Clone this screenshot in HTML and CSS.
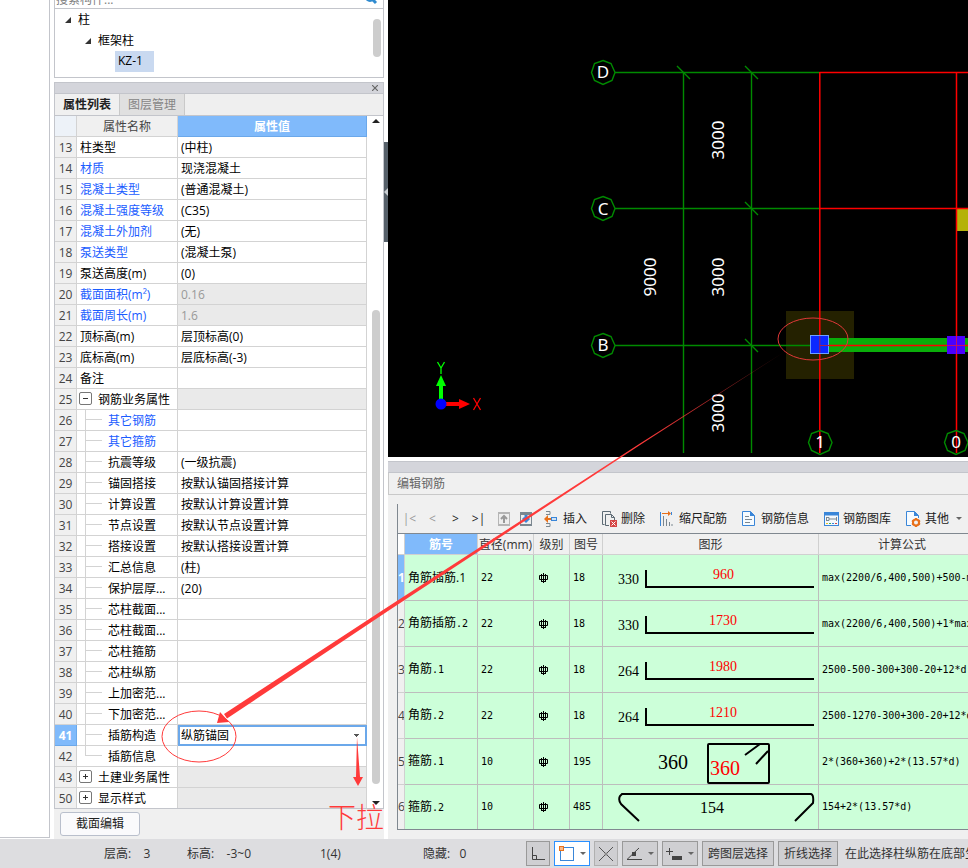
FILE: index.html
```html
<!DOCTYPE html>
<html lang="zh-CN">
<head>
<meta charset="utf-8">
<title>属性列表</title>
<link rel="stylesheet" href="styles.css">
</head>
<body>
<div class="app">
  <main class="workspace">
    <div class="rail"></div>

    <aside class="sidebar">
      <section class="browser">
        <div class="search">
          <input type="text" placeholder="搜索构件..." aria-label="搜索构件">
          <svg width="14" height="14" viewBox="0 0 14 14" aria-hidden="true"><circle cx="6" cy="5" r="4" fill="none" stroke="#2f8bd0" stroke-width="2"/><path d="M8 7l4 4" stroke="#2f8bd0" stroke-width="3"/></svg>
        </div>
        <div class="tree-box">
          <ul class="tree">
            <li class="level-1"><svg width="6" height="6" viewBox="0 0 6 6"><path d="M6 0v6H0z" fill="#333"/></svg><span>柱</span></li>
            <li class="level-2"><svg width="6" height="6" viewBox="0 0 6 6"><path d="M6 0v6H0z" fill="#333"/></svg><span>框架柱</span></li>
            <li class="level-3"><span class="selected">KZ-1</span></li>
          </ul>
          <div class="tree-thumb"></div>
        </div>
      </section>

      <section class="props">
        <div class="dock-bar"><button class="dock-close" aria-label="关闭"><svg width="6" height="6" viewBox="0 0 6 6"><path d="M0 0l6 6M6 0L0 6" stroke="#666" stroke-width="1.2"/></svg></button></div>
        <div class="tabs"><button class="tab active">属性列表</button><button class="tab">图层管理</button></div>
        <div class="props-body">
          <table class="prop-table">
            <colgroup><col class="c-num"><col class="c-name"><col></colgroup>
            <thead><tr><th></th><th>属性名称</th><th class="value-head">属性值</th></tr></thead>
            <tbody>
              <tr><th>13</th><td>柱类型</td><td>(中柱)</td></tr>
              <tr><th>14</th><td class="blue">材质</td><td>现浇混凝土</td></tr>
              <tr><th>15</th><td class="blue">混凝土类型</td><td>(普通混凝土)</td></tr>
              <tr><th>16</th><td class="blue">混凝土强度等级</td><td>(C35)</td></tr>
              <tr><th>17</th><td class="blue">混凝土外加剂</td><td>(无)</td></tr>
              <tr><th>18</th><td class="blue">泵送类型</td><td>(混凝土泵)</td></tr>
              <tr><th>19</th><td>泵送高度(m)</td><td>(0)</td></tr>
              <tr><th>20</th><td class="blue">截面面积(m²)</td><td class="locked">0.16</td></tr>
              <tr><th>21</th><td class="blue">截面周长(m)</td><td class="locked">1.6</td></tr>
              <tr><th>22</th><td>顶标高(m)</td><td>层顶标高(0)</td></tr>
              <tr><th>23</th><td>底标高(m)</td><td>层底标高(-3)</td></tr>
              <tr><th>24</th><td>备注</td><td></td></tr>
              <tr><th>25</th><td class="group"><button class="toggle open" aria-label="收起"></button>钢筋业务属性</td><td class="locked"></td></tr>
              <tr><th>26</th><td class="child blue">其它钢筋</td><td></td></tr>
              <tr><th>27</th><td class="child blue">其它箍筋</td><td></td></tr>
              <tr><th>28</th><td class="child">抗震等级</td><td>(一级抗震)</td></tr>
              <tr><th>29</th><td class="child">锚固搭接</td><td>按默认锚固搭接计算</td></tr>
              <tr><th>30</th><td class="child">计算设置</td><td>按默认计算设置计算</td></tr>
              <tr><th>31</th><td class="child">节点设置</td><td>按默认节点设置计算</td></tr>
              <tr><th>32</th><td class="child">搭接设置</td><td>按默认搭接设置计算</td></tr>
              <tr><th>33</th><td class="child">汇总信息</td><td>(柱)</td></tr>
              <tr><th>34</th><td class="child">保护层厚...</td><td>(20)</td></tr>
              <tr><th>35</th><td class="child">芯柱截面...</td><td></td></tr>
              <tr><th>36</th><td class="child">芯柱截面...</td><td></td></tr>
              <tr><th>37</th><td class="child">芯柱箍筋</td><td></td></tr>
              <tr><th>38</th><td class="child">芯柱纵筋</td><td></td></tr>
              <tr><th>39</th><td class="child">上加密范...</td><td></td></tr>
              <tr><th>40</th><td class="child">下加密范...</td><td></td></tr>
              <tr><th class="current">41</th><td class="child">插筋构造</td><td class="editing"><select aria-label="插筋构造"><option>纵筋锚固</option></select></td></tr>
              <tr><th>42</th><td class="child last">插筋信息</td><td></td></tr>
              <tr><th>43</th><td class="group"><button class="toggle" aria-label="展开"></button>土建业务属性</td><td class="locked"></td></tr>
              <tr><th>50</th><td class="group"><button class="toggle" aria-label="展开"></button>显示样式</td><td class="locked"></td></tr>
            </tbody>
          </table>
          <div class="scroll">
            <svg width="8" height="4" viewBox="0 0 8 4"><path d="M4 0l4 4H0z" fill="#222"/></svg>
            <div class="scroll-thumb"></div>
            <svg width="8" height="4" viewBox="0 0 8 4"><path d="M4 4l4-4H0z" fill="#222"/></svg>
          </div>
        </div>
        <div class="props-foot"><button class="section-edit">截面编辑</button></div>
      </section>
    </aside>

    <div class="splitter"><div class="grip"><svg width="4" height="8" viewBox="0 0 4 8"><path d="M4 0v8L0 4z" fill="#c9ced2"/></svg></div></div>

    <div class="right">
      <section class="viewport">
        <svg class="drawing" width="100%" height="457">
          <rect x="398" y="311" width="68" height="68" fill="#242100"/>
          <g stroke="#008a00" stroke-width="1.400" fill="none">
            <path d="M227 72.500H432M227 208.500H432M227 345.500H432M295.500 72V453M363.500 72V453"/>
            <path d="M289 66l13 13M357 66l13 13M357 202l13 13M357 339l13 13"/>
          </g>
          <rect x="441" y="338" width="160" height="14" fill="#0aad0a"/>
          <rect x="569" y="209" width="30" height="22" fill="#b4b20a"/>
          <path d="M432 72.500H600M432 208.500H600M432 345.500H600M431.800 72V453M568.500 72V453" stroke="#f00" stroke-width="1.500" fill="none"/>
          <rect x="422.500" y="335.500" width="18" height="18" fill="#0a28ff" stroke="#6ea0ff"/>
          <path d="M431.800 336v17M432 345.500h9" stroke="#a02050"/>
          <rect x="559" y="336" width="18" height="18" fill="#4a00ff"/>
          <path d="M568.500 336v18M559 345.500h18" stroke="#c0106a"/>
          <g stroke="#008a00" fill="none">
            <path id="bubble" d="M215 60.500L223 63.500 227 72.500 224 80.500 215 84.500 206.500 80.500 203.500 72.500 206.500 63.500z" stroke-width="1.400"/>
            <use href="#bubble" y="136"/><use href="#bubble" y="273"/>
            <use href="#bubble" x="217" y="370"/><use href="#bubble" x="353" y="370"/>
          </g>
          <g class="cad-text">
            <text x="215" y="78">D</text><text x="215" y="215">C</text><text x="215" y="351">B</text>
            <text x="432" y="448">1</text><text x="568" y="448">0</text>
            <text transform="translate(336 140) rotate(-90)">3000</text>
            <text transform="translate(336 277) rotate(-90)">3000</text>
            <text transform="translate(336 413) rotate(-90)">3000</text>
            <text transform="translate(268 277) rotate(-90)">9000</text>
          </g>
          <path d="M48 386l5-11 5 11z" fill="#0f0"/>
          <path d="M53 404V384" stroke="#0f0" stroke-width="4"/>
          <path d="M56 404h16" stroke="#f00" stroke-width="4"/>
          <path d="M71 399v10l11-5z" fill="#f00"/>
          <circle cx="53" cy="404" r="5.500" fill="#00f"/>
          <path d="M49.500 362l3.500 6 3.500-6M53 368v6" stroke="#0f0" stroke-width="1.300" fill="none"/>
          <path d="M85.500 398l7 12M92.500 398l-7 12" stroke="#f00" stroke-width="1.300" fill="none"/>
        </svg>
      </section>

      <section class="rebar">
        <div class="rebar-bar"></div>
        <h2 class="rebar-title">编辑钢筋</h2>
        <div class="rebar-frame">
          <div class="toolbar">
            <button class="nav off" aria-label="首行">|&lt;</button>
            <button class="nav off" aria-label="上一行">&lt;</button>
            <button class="nav" aria-label="下一行">&gt;</button>
            <button class="nav" aria-label="末行">&gt;|</button>
            <button class="tool icon-only" aria-label="上移"><svg width="12" height="14" viewBox="0 0 12 14"><rect width="12" height="14" fill="#b5b5b5"/><rect x="1" y="2" width="10" height="10" fill="#eee"/><path d="M6 11V4M3 7l3-3 3 3" stroke="#999" stroke-width="2" fill="none"/></svg></button>
            <button class="tool icon-only" aria-label="下移"><svg width="12" height="14" viewBox="0 0 12 14"><rect width="12" height="14" fill="#7b8790"/><rect x="1" y="3" width="10" height="9" fill="#eee"/><path d="M6 3v6M3 6l3 3 3-3" stroke="#3a86d8" stroke-width="3" fill="none"/></svg></button>
            <button class="tool"><svg width="15" height="16" viewBox="0 0 15 16"><path d="M2 .5h4v3H2M2 12.500h4v3H2" stroke="#7b8790" fill="none"/><path d="M7 8H2" stroke="#e8701a" stroke-width="2"/><path d="M4 4v8L0 8z" fill="#e8701a"/><rect x="7.500" y="6.500" width="5" height="3" fill="#cfe2f5" stroke="#3a86d8"/></svg>插入</button>
            <button class="tool"><svg width="15" height="16" viewBox="0 0 15 16"><path d="M2.500 13.500h-2V.5h8v2M7 14.500H3.500v-11h6l3 3V9" stroke="#5d6b75" fill="none"/><path d="M9.500 3.500v3h3" stroke="#5d6b75" fill="none"/><rect x="8" y="9" width="7" height="7" fill="#d64545"/><path d="M9.500 10.500l4 4M13.500 10.500l-4 4" stroke="#fff"/></svg>删除</button>
            <button class="tool"><svg width="15" height="16" viewBox="0 0 15 16"><path d="M.5 1v14" stroke="#3a86d8"/><path d="M2 2.500h8" stroke="#e8701a"/><path d="M8 0v5l3-2.500z" fill="#e8701a"/><path d="M11.500 1v3" stroke="#3a86d8"/><path d="M3.500 5v10M6.500 8v7M9.500 11v4M12 13v2" stroke="#7b8790"/></svg>缩尺配筋</button>
            <button class="tool"><svg width="15" height="15" viewBox="0 0 15 15"><path d="M.5.5h8l4 4v10H.5z" fill="#f6fbff" stroke="#3a86d8"/><path d="M8 0v5h5z" fill="#3a86d8"/><path d="M3 5.500h4M3 8.500h7M3 11.500h5" stroke="#7b8790"/></svg>钢筋信息</button>
            <button class="tool"><svg width="15" height="14" viewBox="0 0 15 14"><rect x=".5" y=".5" width="14" height="13" fill="#f5f8fb" stroke="#3a86d8"/><path d="M0 2h15" stroke="#3a86d8" stroke-width="3"/><path d="M2.500 5v4M2 5.500h3v3H2M5 7h7M12.500 5v4" stroke="#7b8790" fill="none"/><path d="M2 11.500h2" stroke="#e8c020"/><path d="M5 11.500h2" stroke="#35b060"/><path d="M8 11.500h2" stroke="#3a86d8"/><path d="M11 11.500h2" stroke="#d64545"/></svg>钢筋图库</button>
            <button class="tool"><svg width="15" height="16" viewBox="0 0 15 16"><path d="M5 14.500H.5V.5h8l4 4V7" stroke="#3a86d8" fill="#f6fbff"/><path d="M8 0v5h5z" fill="#3a86d8"/><circle cx="10" cy="11.500" r="3" fill="none" stroke="#e8701a" stroke-width="2"/><path d="M10 7v2M10 14v2M6 9.500l1.500 1M12.500 12.500l1.500 1M6 13.500l1.500-1M12.500 10.500l1.500-1" stroke="#e8701a" stroke-width="2"/></svg>其他<i class="caret"></i></button>
          </div>
          <table class="rebar-table">
            <colgroup><col class="r-idx"><col class="r-name"><col class="r-dia"><col class="r-grade"><col class="r-fig"><col class="r-shape"><col></colgroup>
            <thead><tr><th></th><th class="picked">筋号</th><th>直径(mm)</th><th>级别</th><th>图号</th><th>图形</th><th>计算公式</th></tr></thead>
            <tbody>
              <tr><th class="current">1</th><td class="name">角筋插筋.1</td><td>22</td><td><svg class="grade" width="9" height="10" viewBox="0 0 9 10"><use href="#grade-mark"/></svg></td><td>18</td><td class="shape"><svg width="214" height="44" viewBox="0 0 214 44"><text x="15" y="28">330</text><text class="red" x="110" y="23">960</text><path d="M43 14v17h168"/></svg></td><td>max(2200/6,400,500)+500-m</td></tr>
              <tr><th>2</th><td class="name">角筋插筋<span>.2</span></td><td>22</td><td><svg class="grade" width="9" height="10" viewBox="0 0 9 10"><use href="#grade-mark"/></svg></td><td>18</td><td class="shape"><svg width="214" height="44" viewBox="0 0 214 44"><text x="15" y="28">330</text><text class="red" x="106" y="23">1730</text><path d="M43 14v17h168"/></svg></td><td>max(2200/6,400,500)+1*max</td></tr>
              <tr><th>3</th><td class="name">角筋<span>.1</span></td><td>22</td><td><svg class="grade" width="9" height="10" viewBox="0 0 9 10"><use href="#grade-mark"/></svg></td><td>18</td><td class="shape"><svg width="214" height="44" viewBox="0 0 214 44"><text x="15" y="28">264</text><text class="red" x="106" y="23">1980</text><path d="M43 14v17h168"/></svg></td><td>2500-500-300+300-20+12*d</td></tr>
              <tr><th>4</th><td class="name">角筋<span>.2</span></td><td>22</td><td><svg class="grade" width="9" height="10" viewBox="0 0 9 10"><use href="#grade-mark"/></svg></td><td>18</td><td class="shape"><svg width="214" height="44" viewBox="0 0 214 44"><text x="15" y="28">264</text><text class="red" x="106" y="23">1210</text><path d="M43 14v17h168"/></svg></td><td>2500-1270-300+300-20+12*d</td></tr>
              <tr><th>5</th><td class="name">箍筋<span>.1</span></td><td>10</td><td><svg class="grade" width="9" height="10" viewBox="0 0 9 10"><use href="#grade-mark"/></svg></td><td>195</td><td class="shape"><svg width="214" height="44" viewBox="0 0 214 44"><text class="big" x="55" y="29">360</text><text class="big red" x="107" y="35">360</text><rect x="105" y="4" width="61" height="39" rx="1"/><path d="M142 15l15-11M153 24l12-13"/></svg></td><td>2*(360+360)+2*(13.57*d)</td></tr>
              <tr><th>6</th><td class="name">箍筋<span>.2</span></td><td>10</td><td><svg class="grade" width="9" height="10" viewBox="0 0 9 10"><use href="#grade-mark"/></svg></td><td>485</td><td class="shape"><svg width="214" height="44" viewBox="0 0 214 44"><text class="mid" x="97" y="28">154</text><path d="M36 36L18 19q-3-4-1-8l2-2h189q3 1 2 9l-18 18"/></svg></td><td>154+2*(13.57*d)</td></tr>
            </tbody>
          </table>
        </div>
      </section>
    </div>
  </main>

  <footer class="status">
    <div class="readouts"><span>层高:&nbsp;&nbsp;&nbsp; 3</span><span>标高:&nbsp;&nbsp;&nbsp; -3~0</span><span>1(4)</span><span>隐藏:&nbsp;&nbsp; 0</span></div>
    <div class="modes">
      <button class="single" aria-label="正交"><svg width="14" height="14" viewBox="0 0 14 14"><path d="M1.500 0v12.500H14M1.500 8.500h4v4" stroke="#444" fill="none"/></svg></button>
      <button class="split on" aria-label="矩形选择"><svg width="16" height="16" viewBox="0 0 16 16"><rect x="1.500" y="1.500" width="13" height="13" fill="none" stroke="#3a86d8"/><rect x=".5" y=".5" width="4" height="4" fill="#f7b98a" stroke="#e8701a"/></svg><i class="caret"></i></button>
      <button class="single dim" aria-label="交点"><svg width="16" height="16" viewBox="0 0 16 16"><path d="M1 1l14 14M15 1L1 15" stroke="#555"/><circle cx="8" cy="8" r="1.500" fill="#888"/></svg></button>
      <button class="split" aria-label="角度"><svg width="17" height="14" viewBox="0 0 17 14"><path d="M13 1L1 12.500h15" stroke="#444" fill="none"/><rect x="6" y="5" width="4" height="4" fill="#444"/></svg><i class="caret"></i></button>
      <button class="split" aria-label="偏移"><svg width="17" height="14" viewBox="0 0 17 14"><path d="M3.500 1v7M0 4.500h7" stroke="#444"/><rect x="6.500" y="9.500" width="9" height="3" fill="#444" stroke="#444"/></svg><i class="caret"></i></button>
      <button>跨图层选择</button>
      <button>折线选择</button>
    </div>
    <p class="hint">在此选择柱纵筋在底部生根</p>
  </footer>

  <svg class="notes" width="968" height="868" viewBox="0 0 968 868" aria-hidden="true">
    <defs>
      <g id="grade-mark"><path d="M4.500 0v10M.5 2.500h8v4h-8zM2.500 1v7M6.500 1v7M2 8.500h5" stroke="#000" fill="none"/></g>
      <linearGradient id="fade" gradientUnits="userSpaceOnUse" x1="785" y1="352" x2="640" y2="445"><stop offset="0" stop-color="#ff3a3a" stop-opacity=".3"/><stop offset="1" stop-color="#ff3a3a"/></linearGradient>
    </defs>
    <path d="M785 351.500L640 445 388 611 227 718.500 224 714 386 608 640 443.500z" fill="url(#fade)"/>
    <path d="M217 723l3-11 9 10z" fill="#ff3a3a"/>
    <ellipse cx="199" cy="736.500" rx="37" ry="25.500" fill="none" stroke="#ff3a3a"/>
    <ellipse cx="813" cy="339" rx="35" ry="21" fill="none" stroke="#e03838"/>
    <path d="M357 737l3 40h3l-5 9-5-9h3z" fill="#ff3a3a"/>
    <text class="note-text" x="328" y="828">下拉</text>
  </svg>
</div>
</body>
</html>
```
FILE: styles.css
```css
* { box-sizing: border-box; }
body {
  margin: 0;
  background: #fff;
  color: #000;
  font: 12px/20px "Open Sans", "Noto Sans CJK SC", sans-serif;
}
button, input, select { font: inherit; color: inherit; }
button { padding: 0; border: 0; background: none; }
.app { position: relative; display: flex; flex-direction: column; min-height: 100vh; overflow: hidden; }
.workspace { display: flex; flex: 1; }
.rail { width: 50px; margin-bottom: 1px; border: solid #c3c5cb; border-width: 0 1px 1px 0; }

/* left column */
.sidebar { display: flex; flex-direction: column; gap: 4px; width: 330px; margin-left: 4px; }
.browser { border: 1px solid #c3c5cb; border-top: 0; }
.search { display: flex; align-items: center; height: 19px; margin-top: -10px; padding: 0 5px 0 1px; border-bottom: 1px solid #c3c5cb; }
.search input { flex: 1; min-width: 0; height: 18px; padding: 2px 0 0; border: 0; outline: 0; background: none; }
.search input::placeholder { color: #808080; opacity: 1; }
.tree-box { display: flex; justify-content: space-between; height: 68px; padding-right: 2px; }
.tree { margin: 0; padding: 0; list-style: none; }
.tree li { display: flex; align-items: center; gap: 7px; height: 21px; }
.level-1 { padding-left: 10px; }
.level-2 { padding-left: 30px; }
.level-3 { padding-left: 60px; }
.selected { height: 21px; padding: 0 11px 0 3px; background: #c9d9f0; }
.tree-thumb { width: 8px; height: 38px; margin-top: 10px; border-radius: 4px; background: #cdcdcd; }

.props { display: flex; flex: 1; flex-direction: column; background: #f0f0f0; }
.dock-bar { display: flex; align-items: center; justify-content: flex-end; height: 12px; padding-right: 5px; border: 1px solid #c3c5cb; background: #d4d5db; }
.dock-close { display: flex; }
.tabs { display: flex; height: 22px; border: solid #c3c5cb; border-width: 0 1px 1px; background: #efefef; }
.tab { padding: 0 8px; border-right: 1px solid #c9c9c9; background: #e0e0e0; color: #858585; }
.tab.active { background: #f0f0f0; color: #222; font-weight: 600; }
.props-body { display: flex; height: 693px; overflow: hidden; border: solid #c3c5cb; border-width: 0 1px 1px; background: #fff; }
.prop-table { flex: 1; border-collapse: separate; border-spacing: 0; table-layout: fixed; }
.c-num { width: 22px; }
.c-name { width: 101px; }
.prop-table th, .prop-table td {
  height: 21px; padding: 2px 0 0 3px; overflow: hidden;
  border: solid #d3d3d3; border-width: 0 1px 1px 0;
  line-height: 18px; text-align: left; white-space: nowrap;
}
.prop-table th { padding: 2px 0 0; background: #f0f0f0; color: #444; font-weight: 400; text-align: center; }
.prop-table thead th:first-child { background: #edf2f8; }
.prop-table thead th.value-head { border-color: #6ba8ea; background: #80bafb; color: #fff; font-weight: 600; }
.prop-table tbody th.current { border-color: #6ba8ea; background: #80bafb; color: #fff; font-weight: 700; }
.prop-table .blue { color: #1a5cff; }
.prop-table .locked { background: #eaeaea; color: #999; }
.prop-table .child { padding-left: 31px; background: linear-gradient(#d3d3d3, #d3d3d3) 8px 0 / 1px 100% no-repeat, linear-gradient(#d3d3d3, #d3d3d3) 9px 9px / 16px 1px no-repeat; }
.prop-table .child.last { background-size: 1px 10px, 16px 1px; }
.toggle {
  display: inline-block; width: 13px; height: 13px; margin: 1px 6px 0 -1px;
  border: 1px solid #777; border-radius: 2px; vertical-align: top;
  background: linear-gradient(#333, #333) center / 5px 1px no-repeat, linear-gradient(#333, #333) center / 1px 5px no-repeat, #fff;
}
.toggle.open { background: linear-gradient(#333, #333) center / 5px 1px no-repeat, #fff; }
.prop-table .editing { padding: 0 5px 0 1px; border: 2px solid #6ba8ea; }
.editing select {
  display: block; width: 100%; height: 17px; padding: 0; border: 0; outline: 0; appearance: none; line-height: 17px;
  background: linear-gradient(#555, #555) right 1px top 7px / 5px 1px no-repeat, linear-gradient(#555, #555) right 2px top 8px / 3px 1px no-repeat, linear-gradient(#555, #555) right 3px top 9px / 1px 1px no-repeat;
}
.scroll { display: flex; flex-direction: column; align-items: center; width: 16px; padding: 3px 0 3px 1px; }
.scroll-thumb { width: 8px; height: 474px; margin: auto 0 17px; border-radius: 4px; background: #cdcdcd; }
.props-foot { padding: 3px 6px 3px; }
.section-edit { width: 80px; height: 24px; border: 1px solid #b9bfcc; border-radius: 3px; background: #fafafc; color: #222; }

.splitter { width: 4px; padding-top: 142px; }
.grip { display: flex; align-items: center; height: 100px; background: #566069; }

/* right column */
.right { display: flex; flex: 1; flex-direction: column; min-width: 0; }
.viewport { margin-bottom: 4px; background: #000; }
.drawing { display: block; }
.cad-text { fill: #fff; font: 17px "Noto Sans", sans-serif; text-anchor: middle; }
.rebar { flex: 1; background: #f0f0f0; }
.rebar-bar { height: 12px; border: solid #c3c5cb; border-width: 1px 0; background: #d4d5db; }
.rebar-title { height: 22px; margin: 0; padding-left: 8px; border: solid #c9c9c9; border-width: 0 0 1px 1px; color: #666; font-size: 12px; font-weight: 400; line-height: 22px; }
.rebar-frame { margin: 9px 0 9px 9px; overflow: hidden; border-left: 1px solid #808890; }
.toolbar { display: flex; align-items: center; height: 30px; overflow: hidden; border-bottom: 1px solid #808890; }
.toolbar button { flex: none; }
.nav { width: 23px; color: #222; }
.nav.off { color: #999; }
.tool { display: flex; align-items: center; gap: 4px; margin-right: 15px; color: #222; }
.tool.icon-only { margin: 0 0 0 8px; }
.icon-only + .tool:not(.icon-only) { margin-left: 12px; }
.tool.icon-only + .icon-only { margin-left: 10px; }
.caret { width: 0; height: 0; margin-left: 3px; border: solid transparent; border-width: 3px 3px 0; border-top-color: #666; }

/* the last column runs on past the window, as in a scrolled grid */
.rebar-table { width: calc(100% + 18px); border-collapse: separate; border-spacing: 0; table-layout: fixed; border-bottom: 1px solid #808890; }
.r-idx { width: 7px; }
.r-name { width: 73px; }
.r-dia { width: 56px; }
.r-grade { width: 36px; }
.r-fig { width: 33px; }
.r-shape { width: 216px; }
.rebar-table th, .rebar-table td { overflow: hidden; padding: 0; border: solid #bdbdbd; border-width: 0 1px 1px 0; white-space: nowrap; }
.rebar-table thead th { height: 21px; padding-top: 2px; border-color: #d0d0d0; color: #333; font-weight: 400; line-height: 18px; text-align: center; }
.rebar-table thead th:first-child { background: #fff; }
.rebar-table thead th.picked { background: #80bafb; color: #fff; font-weight: 600; }
.rebar-table tbody th { height: 46px; border-color: #d0d0d0; color: #444; font-weight: 400; }
.rebar-table tbody th.current { background: #80bafb; color: #fff; font-weight: 700; }
.rebar-table tbody td { padding-left: 3px; background: #ccffd9; font: 10px/20px "DejaVu Sans Mono", monospace; }
.rebar-table tbody tr:last-child > * { height: 44px; border-bottom: 0; }
.rebar-table td.name { font: 12px/20px "Open Sans", "Noto Sans CJK SC", sans-serif; }
.name span { font: 10px/20px "DejaVu Sans Mono", monospace; }
.grade { display: block; margin-left: 2px; }
.rebar-table td.shape { padding: 0; }
.shape svg { display: block; fill: none; stroke: #000; stroke-width: 2; }
.shape text { fill: #000; stroke: none; font: 14px "Liberation Serif", serif; }
.shape text.mid { font-size: 16px; }
.shape text.big { font-size: 20px; }
.shape text.red { fill: #f00; }

/* bottom strip */
.status { display: flex; align-items: center; height: 29px; overflow: hidden; background: #dddde0; color: #333; white-space: nowrap; }
.readouts { display: grid; grid-template-columns: 83px 133px 103px 103px; flex: none; padding-left: 104px; }
.modes { display: flex; flex: none; gap: 4px; }
.modes button { display: flex; align-items: center; justify-content: center; gap: 2px; height: 25px; padding: 0 5px; border: 1px solid #999; background: #cfcfd2; }
.modes .single { width: 24px; padding: 0; }
.modes .split { width: 36px; padding: 0; }
.modes button.on { border-color: #2a90ff; background: #fff; }
.modes button.dim { border-color: #b0b0b0; }
.hint { flex: 1; min-width: 0; margin: 0 0 0 7px; overflow: hidden; }

/* hand-drawn marks laid over the whole window */
.notes { position: absolute; top: 0; left: 0; pointer-events: none; }
.note-text { fill: #ff3a3a; font: 300 28px "Noto Sans CJK SC", sans-serif; }
```
